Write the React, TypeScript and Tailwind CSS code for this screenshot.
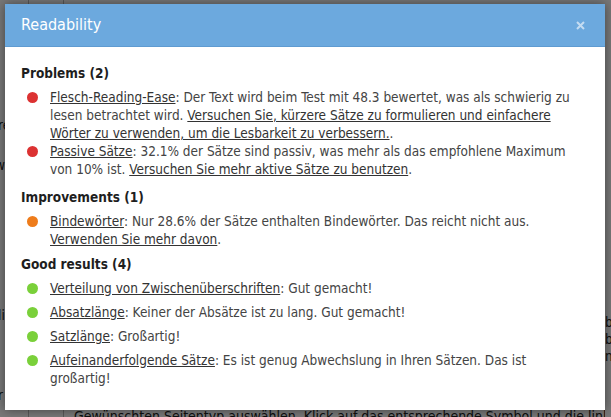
import React from 'react'

type Item = { label: string; text: string; link?: string; tail?: string }

const problems: Item[] = [
  {
    label: 'Flesch-Reading-Ease',
    text: ': Der Text wird beim Test mit 48.3 bewertet, was als schwierig zu lesen betrachtet wird. ',
    link: 'Versuchen Sie, kürzere Sätze zu formulieren und einfachere Wörter zu verwenden, um die Lesbarkeit zu verbessern.',
    tail: '.',
  },
  {
    label: 'Passive Sätze',
    text: ': 32.1% der Sätze sind passiv, was mehr als das empfohlene Maximum von 10% ist. ',
    link: 'Versuchen Sie mehr aktive Sätze zu benutzen',
    tail: '.',
  },
]

const improvements: Item[] = [
  {
    label: 'Bindewörter',
    text: ': Nur 28.6% der Sätze enthalten Bindewörter. Das reicht nicht aus. ',
    link: 'Verwenden Sie mehr davon',
    tail: '.',
  },
]

const good: Item[] = [
  { label: 'Verteilung von Zwischenüberschriften', text: ': Gut gemacht!' },
  { label: 'Absatzlänge', text: ': Keiner der Absätze ist zu lang. Gut gemacht!' },
  { label: 'Satzlänge', text: ': Großartig!' },
  { label: 'Aufeinanderfolgende Sätze', text: ': Es ist genug Abwechslung in Ihren Sätzen. Das ist großartig!' },
]

function ResultList({ items, color, gap }: { items: Item[]; color: string; gap: string }) {
  return (
    <ul className="flex flex-col">
      {items.map((it) => (
        <li key={it.label} className={`flex items-start ${gap}`}>
          <span className={`mt-[3.5px] ml-[6px] mr-[12px] h-[11px] w-[11px] shrink-0 rounded-full ${color}`} />
          <p className="w-[533px]">
            <a className="underline text-[#333]">{it.label}</a>
            {it.text}
            {it.link && <a className="underline text-[#333]">{it.link}</a>}
            {it.tail}
          </p>
        </li>
      ))}
    </ul>
  )
}

function Heading({ children, className = '' }: { children: React.ReactNode; className?: string }) {
  return <h3 className={`mb-[6px] font-bold text-[#1e1e1e] ${className}`}>{children}</h3>
}

export default function App() {
  return (
    <div
      className="relative h-[417px] w-[611px] overflow-hidden bg-white text-[13.5px] leading-[18px]"
      style={{ fontFamily: '"DejaVu Sans Condensed", "DejaVu Sans", sans-serif' }}
    >
      {/* page behind the dialog */}
      <div className="flex h-full text-[#222]">
        <div className="flex w-[31px] flex-col border-r border-[#bbb] pt-[116px] -ml-[2px]">
          <span className="h-[40px]">re</span>
          <span className="h-[150px] -ml-[3px]">w</span>
          <span className="h-[80px]">li</span>
          <span>r</span>
        </div>
        <div className="w-[35px] border-r border-[#bbb]" />
        <div className="flex flex-1 flex-col justify-end overflow-hidden pb-[1px] pl-[10px]">
          <p className="whitespace-nowrap text-[14px] leading-[16px] -mb-[8px]">
            Gewünschten Seitentyp auswählen. Klick auf das entsprechende Symbol und die linke Maustaste
          </p>
        </div>
        <div className="flex w-[6px] flex-col overflow-hidden pt-[314px] leading-[17px]">
          <span>bei</span>
          <span>bis</span>
          <span>nur</span>
        </div>
      </div>

      {/* overlay + dialog */}
      <div className="absolute inset-0 bg-black/[0.53] pl-[5px] pt-[4px]">
        <div className="flex h-[406px] w-[600px] flex-col bg-white shadow-[0_0_10px_rgba(0,0,0,0.45)]">
          <div className="flex h-[43px] shrink-0 items-center justify-between border-b border-[#5f9bd1] bg-[#6ca9de] pl-4 pr-[20px]">
            <span className="text-[16px] text-white">Readability</span>
            <svg width="9" height="9" viewBox="0 0 9 9" className="text-white/60">
              <path d="M1 1L8 8M8 1L1 8" stroke="currentColor" strokeWidth="2" />
            </svg>
          </div>
          <div className="pl-4 pt-[17px] text-[#444]">
            <Heading>Problems (2)</Heading>
            <ResultList items={problems} color="bg-[#dc3232]" gap="" />
            <Heading className="mt-[10px]">Improvements (1)</Heading>
            <ResultList items={improvements} color="bg-[#ee7c1b]" gap="" />
            <Heading className="mt-[7px]">Good results (4)</Heading>
            <ResultList items={good} color="bg-[#7ad03a]" gap="mb-[6px]" />
          </div>
        </div>
      </div>
    </div>
  )
}
